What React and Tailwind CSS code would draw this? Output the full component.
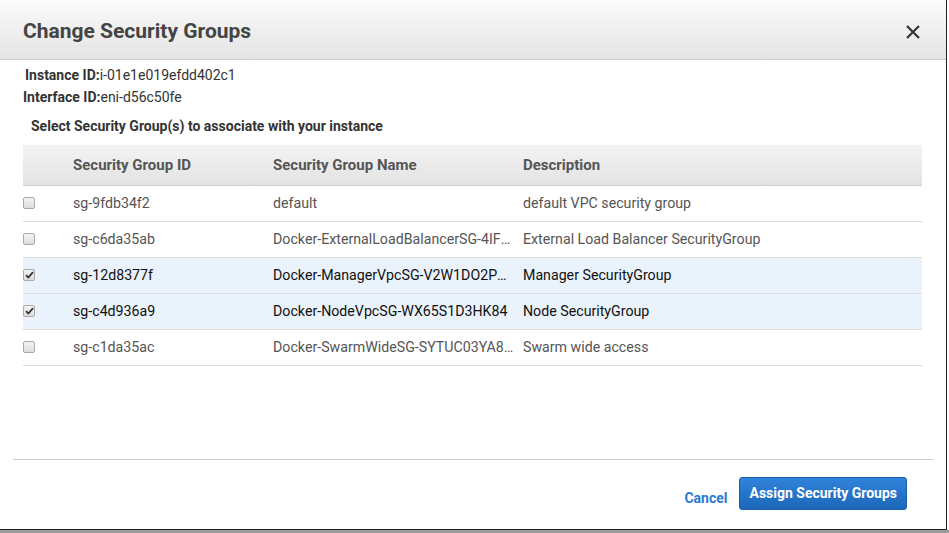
import React from 'react'

const groups = [
  { id: 'sg-9fdb34f2', name: 'default', desc: 'default VPC security group', checked: false },
  { id: 'sg-c6da35ab', name: 'Docker-ExternalLoadBalancerSG-4IFXQ2M8ZT1L', desc: 'External Load Balancer SecurityGroup', checked: false },
  { id: 'sg-12d8377f', name: 'Docker-ManagerVpcSG-V2W1DO2PQ7KL', desc: 'Manager SecurityGroup', checked: true },
  { id: 'sg-c4d936a9', name: 'Docker-NodeVpcSG-WX65S1D3HK84', desc: 'Node SecurityGroup', checked: true },
  { id: 'sg-c1da35ac', name: 'Docker-SwarmWideSG-SYTUC03YA8RB', desc: 'Swarm wide access', checked: false },
]

function Checkbox({ checked }) {
  return (
    <span className="flex h-[12px] w-[12px] items-center justify-center rounded-[2px] border border-[#a9a9a9] bg-gradient-to-b from-[#f4f4f4] to-[#dcdcdc]">
      {checked && (
        <svg width="9" height="8" viewBox="0 0 9 8">
          <path d="M1 4.2 L3.4 6.5 L8 1.2" fill="none" stroke="#333" strokeWidth="1.8" />
        </svg>
      )}
    </span>
  )
}

export default function App() {
  return (
    <div className="flex h-[533px] w-[949px] flex-col bg-white font-['Roboto',sans-serif]">
      <div className="flex h-[530px] w-[947px] flex-col border-r border-b border-[#222] bg-white">
        <div className="flex h-[60px] shrink-0 items-center justify-between border-b border-[#cccccc] bg-gradient-to-b from-[#fbfbfb] to-[#e4e4e4] pt-[4px] pl-[23px] pr-[26px]">
          <h2 className="text-[21px] font-bold text-[#444]">Change Security Groups</h2>
          <svg width="14" height="14" viewBox="0 0 14 14">
            <path d="M1 1 L13 13 M13 1 L1 13" stroke="#333" strokeWidth="2.2" />
          </svg>
        </div>

        <div className="pt-[4px] text-[14px] leading-[22px] text-[#333]">
          <p className="pl-[25px]"><span className="font-bold">Instance ID:</span>i-01e1e019efdd402c1</p>
          <p className="pl-[23px]"><span className="font-bold">Interface ID:</span>eni-d56c50fe</p>
          <p className="mt-[7px] pl-[31px] font-bold text-[#333]">Select Security Group(s) to associate with your instance</p>
        </div>

        <div className="mx-[23px] mt-[8px] w-[899px] text-[14.2px]">
          <div className="flex h-[41px] items-center border-b border-[#cfcfcf] bg-gradient-to-b from-[#f3f3f3] to-[#e3e3e3] text-[15px] font-bold text-[#555]">
            <div className="w-[50px]" />
            <div className="w-[200px]">Security Group ID</div>
            <div className="w-[250px]">Security Group Name</div>
            <div>Description</div>
          </div>
          {groups.map((g) => (
            <div
              key={g.id}
              className={`flex h-[36px] items-center border-b border-[#dddddd] ${g.checked ? 'bg-[#eaf2fc] text-[#111]' : 'bg-white text-[#555]'}`}
            >
              <div className="w-[50px] pb-[2px]"><Checkbox checked={g.checked} /></div>
              <div className="w-[200px]">{g.id}</div>
              <div className="w-[250px] truncate pr-[8px]">{g.name}</div>
              <div>{g.desc}</div>
            </div>
          ))}
        </div>

        <div className="flex-1" />
        <div className="mx-[13px] border-t border-[#cccccc]" />
        <div className="flex h-[69px] items-start justify-end gap-[12px] pr-[39px] pt-[17px]">
          <button className="mt-[11px] text-[14px] font-bold text-[#2a7ad4]">Cancel</button>
          <button className="h-[33px] rounded-[3px] border border-[#1a5ea8] bg-gradient-to-b from-[#3083da] to-[#1c67ba] px-[9px] text-[14px] font-bold text-white">
            Assign Security Groups
          </button>
        </div>
      </div>
      <div className="flex-1 bg-[#9b9b9b]" />
    </div>
  )
}
